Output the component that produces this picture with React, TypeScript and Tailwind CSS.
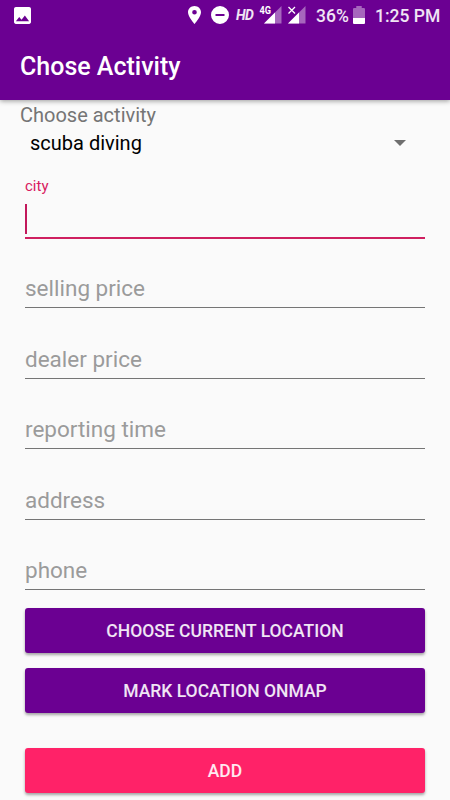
import React, { useState } from "react";
import clsx from "clsx";

const fields = ["selling price", "dealer price", "reporting time", "address", "phone"];

function ImageIcon() {
	return (
		<svg width="17" height="17" viewBox="3 3 18 18" fill="white">
			<path d="M21 19V5c0-1.100-.9-2-2-2H5c-1.100 0-2 .9-2 2v14c0 1.100.9 2 2 2h14c1.100 0 2-.9 2-2zM8.500 13.500l2.500 3.010L14.500 12l4.500 6H5l3.500-4.500z" />
		</svg>
	);
}

function PinIcon() {
	return (
		<svg width="13" height="18" viewBox="5 2 14 20" preserveAspectRatio="none" fill="white">
			<path d="M12 2C8.130 2 5 5.130 5 9c0 5.250 7 13 7 13s7-7.750 7-13c0-3.870-3.130-7-7-7zm0 9.500a2.500 2.500 0 1 1 0-5 2.500 2.500 0 0 1 0 5z" />
		</svg>
	);
}

function DoNotDisturbIcon() {
	return (
		<svg width="18" height="18" viewBox="2 2 20 20" fill="white">
			<path d="M12 2a10 10 0 1 0 0 20 10 10 0 0 0 0-20zm5 11.200H7v-2.400h10z" />
		</svg>
	);
}

function SignalIcon({ label, noService }: { label?: string; noService?: boolean }) {
	return (
		<svg width="23" height="18" viewBox="0 0 23 18" fill="white" className="overflow-visible">
			<path d="M22.500 0v17.500H5z" opacity="0.4" />
			<path d="M16 6.500v11H5z" />
			{label && (
				<text x="0.500" y="7.500" fontFamily="Roboto" fontSize="11.500" fontWeight="700" textLength="11.500" lengthAdjust="spacingAndGlyphs">
					{label}
				</text>
			)}
			{noService && <path d="M5.500 1l6.500 6.500M12 1L5.500 7.500" stroke="white" strokeWidth="1.300" />}
		</svg>
	);
}

function BatteryIcon() {
	return (
		<svg width="12" height="18" viewBox="0 0 11 18" preserveAspectRatio="none" fill="white">
			<path d="M3 0h5v2h2q1 0 1 1v9H0V3q0-1 1-1h2z" opacity="0.4" />
			<path d="M0 12h11v5q0 1-1 1H1q-1 0-1-1z" />
		</svg>
	);
}

function StatusBar() {
	return (
		<div className="flex h-[30px] items-center pr-[9px] pl-[14px] text-[17.5px] font-medium whitespace-nowrap text-white/90">
			<ImageIcon />
			<div className="ml-auto flex items-center">
				<PinIcon />
				<span className="ml-[10px]">
					<DoNotDisturbIcon />
				</span>
				<span className="ml-[7px] w-[18px] text-[14px] font-bold tracking-[-0.5px] italic">HD</span>
				<span className="ml-[5px]">
					<SignalIcon label="4G" />
				</span>
				<span className="ml-px">
					<SignalIcon noService />
				</span>
				<span className="ml-[10px] w-[34px] pt-[2px]">36%</span>
				<span className="ml-[3px]">
					<BatteryIcon />
				</span>
				<span className="ml-[10px] w-[66px] pt-[2px]">1:25 PM</span>
			</div>
		</div>
	);
}

function ActionButton({ label, className }: { label: string; className: string }) {
	return (
		<button
			type="button"
			className={clsx(
				"h-[45px] w-full rounded-[3px] pt-[2px] text-[17.5px] font-medium text-white/90 shadow-[0_2px_3px_rgba(0,0,0,0.35)]",
				className
			)}
		>
			{label}
		</button>
	);
}

export default function App() {
	const [values, setValues] = useState<Record<string, string>>({});

	return (
		<div className="h-[800px] w-[450px] overflow-hidden bg-[#fafafa] font-['Roboto',sans-serif]">
			<header className="relative h-[100px] bg-[#6b0092] shadow-[0_1px_5px_rgba(0,0,0,0.4)]">
				<StatusBar />
				<h1 className="pt-[22px] pl-[20px] text-[25px] leading-[30px] font-medium text-white">Chose Activity</h1>
			</header>

			<main className="pt-[3px]">
				<p className="pl-[20px] text-[20px] leading-6 text-[#757575]">Choose activity</p>
				<div className="flex h-8 items-center justify-between pr-[44px] pl-[30px] text-[20px] text-black">
					<span>scuba diving</span>
					<svg width="12" height="6" viewBox="0 0 12 6" fill="#6f6f6f">
						<path d="M0 0h12L6 6z" />
					</svg>
				</div>

				<form className="px-[25px] pt-[18px]">
					<div className="h-[62px] border-b-2 border-[#cf2060]">
						<label className="block text-[15px] leading-[18px] text-[#d81b60]">city</label>
						<div className="mt-[9px] h-[30px] w-[2px] bg-[#c2185b]" />
					</div>

					<div className="-mt-[1.5px]">
						{fields.map((name) => (
							<div key={name} className="flex h-[70.5px] flex-col justify-end border-b border-[#757575]">
								<input
									className="h-[38px] w-full bg-transparent text-[22.5px] text-black outline-none placeholder:text-[#9b9b9b]"
									placeholder={name}
									value={values[name] ?? ""}
									onChange={(e) => setValues({ ...values, [name]: e.target.value })}
								/>
							</div>
						))}
					</div>

					<div className="mt-[17.5px] grid gap-[15px]">
						<ActionButton label="CHOOSE CURRENT LOCATION" className="bg-[#6b0092]" />
						<ActionButton label="MARK LOCATION ONMAP" className="bg-[#6b0092]" />
						<ActionButton label="ADD" className="mt-[20px] bg-[#ff2268]" />
					</div>
				</form>
			</main>
		</div>
	);
}
